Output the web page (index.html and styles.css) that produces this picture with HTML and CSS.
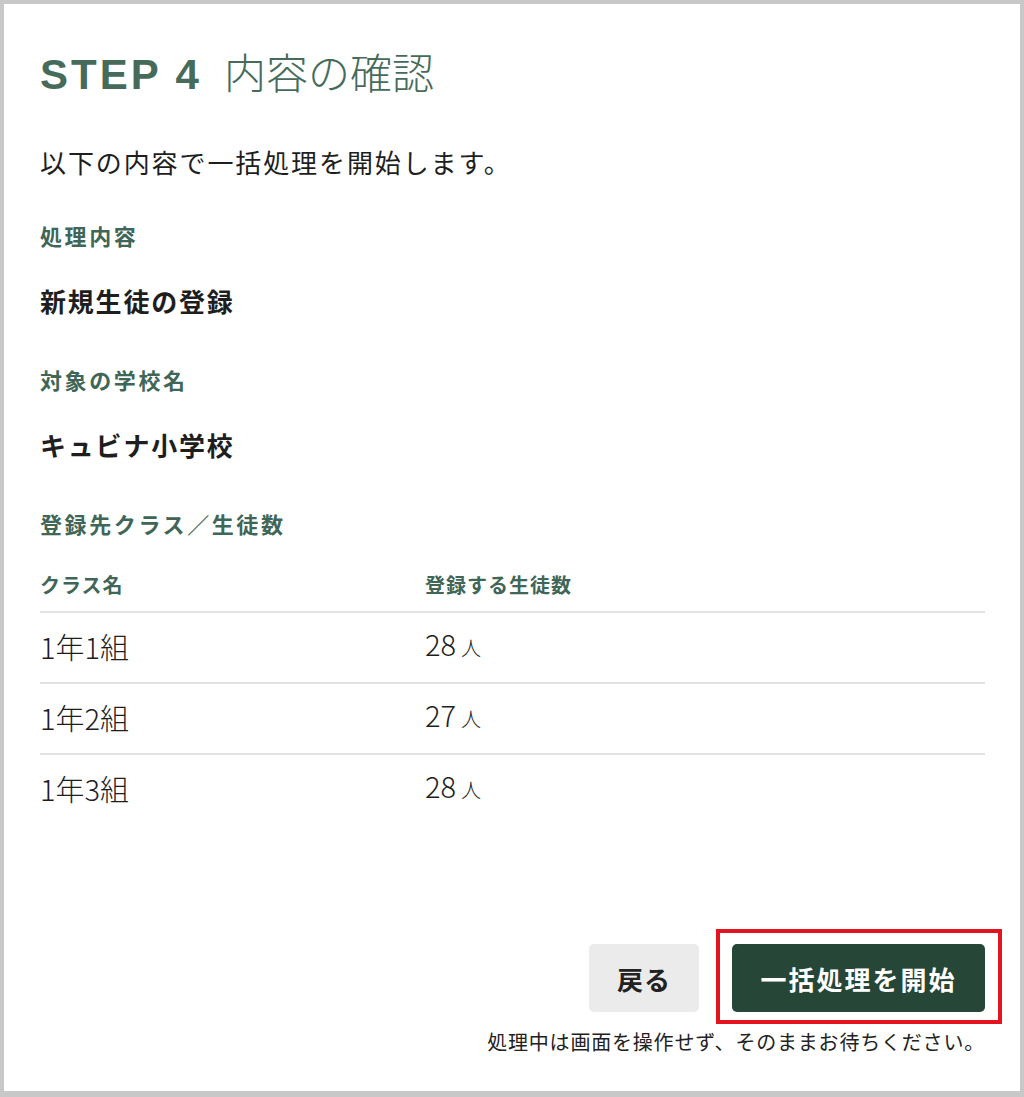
FILE: index.html
```html
<!DOCTYPE html>
<html lang="ja">
<head>
<meta charset="utf-8">
<title>STEP 4 内容の確認</title>
<link rel="stylesheet" href="styles.css">
</head>
<body>
<main class="page">
  <h1 class="title"><span class="step">STEP 4</span><span class="title-jp">内容の確認</span></h1>
  <p class="lead">以下の内容で一括処理を開始します。</p>

  <h2 class="label label-first">処理内容</h2>
  <p class="value">新規生徒の登録</p>

  <h2 class="label">対象の学校名</h2>
  <p class="value">キュビナ小学校</p>

  <h2 class="label">登録先クラス／生徒数</h2>
  <div class="table">
    <div class="row head">
      <div class="cell">クラス名</div>
      <div class="cell">登録する生徒数</div>
    </div>
    <div class="row">
      <div class="cell">1年1組</div>
      <div class="cell">28<span class="unit">人</span></div>
    </div>
    <div class="row">
      <div class="cell">1年2組</div>
      <div class="cell">27<span class="unit">人</span></div>
    </div>
    <div class="row last">
      <div class="cell">1年3組</div>
      <div class="cell">28<span class="unit">人</span></div>
    </div>
  </div>

  <footer class="footer">
    <div class="actions">
      <button class="btn btn-back" type="button">戻る</button>
      <button class="btn btn-primary" type="button">一括処理を開始</button>
    </div>
    <p class="note">処理中は画面を操作せず、そのままお待ちください。</p>
  </footer>
</main>
</body>
</html>
```

FILE: styles.css
```css
html, body {
  margin: 0;
  padding: 0;
  background: #ffffff;
}

body {
  font-family: "Liberation Sans", "Noto Sans CJK JP", sans-serif;
  color: #1e1e1e;
}

.page {
  box-sizing: border-box;
  width: 1024px;
  height: 1097px;
  border: 4px solid #c8c8c8;
  border-bottom-width: 6px;
  padding: 42px 35px 34px 36px;
  display: flex;
  flex-direction: column;
}

.title {
  margin: 0;
  font-size: 42px;
  line-height: 50px;
  font-weight: normal;
  color: #466b5b;
  display: flex;
  align-items: baseline;
}

.step {
  font-weight: bold;
  letter-spacing: 3px;
  margin-right: 22px;
}

.title-jp {
  font-family: "Noto Sans CJK JP", sans-serif;
  font-weight: 300;
  letter-spacing: 0;
}

.lead {
  margin: 46px 0 0;
  font-size: 26px;
  line-height: 36px;
  letter-spacing: 1.9px;
}

.label {
  margin: 46px 0 0;
  font-size: 22px;
  line-height: 30px;
  font-weight: bold;
  color: #3f6656;
  letter-spacing: 2.6px;
}

.label-first {
  margin-top: 41px;
}

.value {
  margin: 32px 0 0;
  font-size: 26px;
  line-height: 36px;
  font-weight: bold;
  letter-spacing: 1.8px;
}

.table {
  margin-top: 31px;
  display: flex;
  flex-direction: column;
}

.row {
  display: grid;
  grid-template-columns: 385px 1fr;
  align-items: center;
  height: 69px;
  border-bottom: 2px solid #e2e2e2;
  font-family: "Noto Sans CJK JP", sans-serif;
  font-size: 29px;
  font-weight: 300;
  line-height: 36px;
}

.row .cell {
  padding-bottom: 4px;
}

.row.head {
  height: 39px;
  align-items: start;
  font-family: "Liberation Sans", "Noto Sans CJK JP", sans-serif;
  font-size: 20px;
  line-height: 28px;
  font-weight: bold;
  color: #3f6656;
  letter-spacing: 1px;
}

.row.head .cell {
  padding-bottom: 0;
}

.row.last {
  border-bottom: none;
}

.unit {
  font-size: 20px;
  margin-left: 5px;
}

.footer {
  margin-top: auto;
  display: flex;
  flex-direction: column;
  align-items: flex-end;
}

.actions {
  display: flex;
  gap: 33px;
}

.btn {
  position: relative;
  font-family: "Liberation Sans", "Noto Sans CJK JP", sans-serif;
  height: 68px;
  border: none;
  border-radius: 5px;
  font-size: 26px;
  font-weight: bold;
  letter-spacing: 1px;
  cursor: pointer;
}

.btn-back {
  width: 110px;
  background: #ebebeb;
  color: #222222;
}

.btn-primary {
  width: 253px;
  background: #264637;
  color: #ffffff;
  letter-spacing: 2px;
}

.btn-primary::after {
  content: "";
  position: absolute;
  top: -15px;
  right: -17px;
  bottom: -12px;
  left: -16px;
  border: 4px solid #e3141e;
  pointer-events: none;
}

.note {
  margin: 17px 0 0;
  font-size: 20px;
  line-height: 28px;
  color: #222222;
  letter-spacing: 0.8px;
}
```
